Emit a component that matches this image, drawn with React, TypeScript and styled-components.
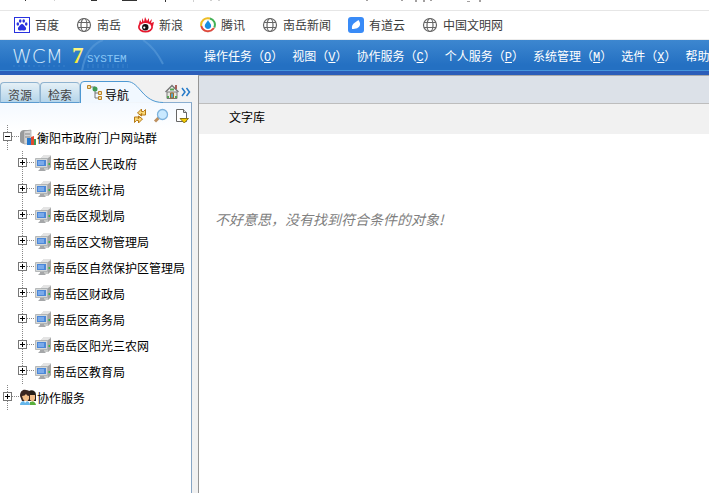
import React from "react";
import styled, { createGlobalStyle } from "styled-components";

const Global = createGlobalStyle`
  * { box-sizing: border-box; }
  html, body, #root { height: 100%; }
  body { margin: 0; background: #fff; color: #000; font: 12px/16px "Noto Sans CJK SC", sans-serif; overflow: hidden; }
  button { border: 0; padding: 0; background: none; font: inherit; color: inherit; cursor: pointer; }
  a { color: inherit; text-decoration: none; }
  svg { display: block; flex: none; }
`;

const Page = styled.div`display: flex; flex-direction: column; height: 100vh; overflow: hidden;`;
const BrowserEdge = styled.div`height: 11px; flex: none; overflow: hidden; border-bottom: 1px solid #e6e6e6;`;
const Bookmarks = styled.nav`
  display: flex; align-items: center; gap: 17px; height: 29px; flex: none; padding-left: 14px;
  color: #3c3c3c; white-space: nowrap; border-bottom: 1px solid #ececec;
`;
const Bookmark = styled.a`display: flex; align-items: center; gap: 5px;`;
const Header = styled.header`
  display: flex; flex: none; height: 35px; overflow: hidden; color: #fff;
  background: linear-gradient(#3d87d0, #2470c2 80%, #2470c2);
  border-bottom: 4px solid #2b5db9; box-shadow: inset 0 -1px #4595dc;
`;
const LogoBox = styled.div`width: 204px; flex: none;`;
const Menu = styled.nav`display: flex; gap: 9px; padding-top: 8px; white-space: nowrap;`;
const MenuButton = styled.button`height: 16px; line-height: 16px; flex: none;`;
const AccessKey = styled.u`font-family: "Liberation Mono", monospace;`;
const Workspace = styled.div`display: flex; flex: 1; min-height: 0; background: #f1f1f1;`;
const Sidebar = styled.aside`display: flex; flex-direction: column; width: 192px; flex: none; padding-top: 6px;`;
const TabBar = styled.div`display: flex; align-items: flex-end; height: 22px; flex: none;`;
const Tab = styled.button`
  width: 40px; height: 21px; padding-top: 4px; color: #444; border: 1px solid #8fb3d0; border-right-color: #a8c4da;
  border-bottom-color: #5b9bd0; border-radius: 4px 4px 0 0; background: linear-gradient(#e5f0f6, #b4d4ea); line-height: 16px;
`;
const ActiveTab = styled.button`position: relative; width: 83px; height: 22px; text-align: left;`;
const TabShape = styled.svg`position: absolute; left: 0; top: 0;`;
const TabLabel = styled.span`position: relative; display: flex; gap: 2px; padding: 1px 0 0 7px; & > span { padding-top: 4px; }`;
const TabTools = styled.div`
  display: flex; flex: 1; align-self: stretch; align-items: center; gap: 2px; padding-left: 2px;
  border-bottom: 1px solid #8aaed0;
`;
const Panel = styled.div`flex: 1; border-right: 1px solid #87a5c4; background: linear-gradient(#f4f9ff, #fff 28px);`;
const PanelTools = styled.div`display: flex; justify-content: flex-end; gap: 5px; height: 22px; padding: 4px 1px 0 0;`;
const Tree = styled.ul`list-style: none; margin: 0; padding: 0;`;
const NodeLink = styled.a`display: flex; align-items: center;`;
const Node = styled.li<{ $child?: boolean }>`
  display: flex; align-items: center; height: 26px; padding-left: ${p => (p.$child ? 17 : 2)}px; white-space: nowrap;
  ${NodeLink} { gap: ${p => (p.$child ? 1 : 0)}px; }
`;
const Toggle = styled.button`width: 18px; height: 26px; flex: none;`;
const Content = styled.main`flex: 1; min-width: 0; margin-left: 6px; background: #fff; border-left: 1px solid #959595; border-top: 1px solid #aaa;`;
const TopStrip = styled.div`height: 28px; background: #dce1e8; border-bottom: 1px solid #bdbdbd;`;
const Title = styled.h1`margin: 0; height: 30px; padding: 5px 0 0 30px; font-size: 12px; line-height: 16px; font-weight: 400; background: #f1f1f1;`;
const Empty = styled.p`margin: 75px 0 0 16px; font-size: 14px; line-height: 20px; font-style: italic; color: #808080;`;

const Globe = () => (
  <svg width="16" height="16" viewBox="0 0 16 16" fill="none" stroke="#666" strokeWidth="1.2">
    <circle cx="8" cy="8" r="6.5" /><ellipse cx="8" cy="8" rx="3" ry="6.5" /><path d="M2 5.5h12M2 10.5h12" />
  </svg>
);
const Baidu = () => (
  <svg width="16" height="16" viewBox="0 0 16 16">
    <rect x=".5" y=".5" width="15" height="15" fill="#fff" stroke="#2932df" />
    <g fill="#2932df"><ellipse cx="3.8" cy="7" rx="1.3" ry="1.8" /><ellipse cx="6.2" cy="4" rx="1.3" ry="1.8" /><ellipse cx="9.7" cy="4" rx="1.3" ry="1.8" /><ellipse cx="12.2" cy="7" rx="1.3" ry="1.8" /><path d="M8 7c1.5 0 2 1.7 3.2 2.7 1.5 1.3 1.2 3.6-.8 3.8-1 .1-1.5-.3-2.4-.3s-1.6.4-2.6.2c-1.8-.3-2-2.400-.6-3.700C6 8.600 6.500 7 8 7z" /></g>
  </svg>
);
const Sina = () => (
  <svg width="16" height="16" viewBox="0 0 16 16">
    <path d="M1 7 2 3l2 3V1l2 4 1-5 2 4 2-3v4l3-3-1 4 3-1-1 4z" fill="#e6162d" />
    <ellipse cx="7.5" cy="10" rx="7.5" ry="5.5" fill="#e6162d" /><ellipse cx="7.5" cy="10" rx="5.8" ry="3.9" fill="#fff" />
    <circle cx="7.3" cy="10.3" r="3.2" fill="#111" /><circle cx="6.3" cy="10.6" r="1.1" fill="#fff" />
  </svg>
);
const Tencent = () => (
  <svg width="16" height="16" viewBox="0 0 16 16" fill="none" strokeWidth="2">
    <circle cx="8" cy="8" r="7" fill="#fff" stroke="#ddd" strokeWidth="1" />
    <path d="M1.2 9C.5 4 5 0 10 1.500" stroke="#eebd24" /><path d="M10 1.500c4 1 6 5 4.300 9" stroke="#43b156" /><path d="M14 11c-4 5-11 4-12.700-2" stroke="#df493c" />
    <path d="M8 3c.5 2 4 4 3 7-1 2.500-5 2.500-6 0-1-3 2.500-5 3-7z" fill="#188fe0" />
  </svg>
);
const Youdao = () => (
  <svg width="16" height="16" viewBox="0 0 16 16"><rect width="16" height="16" rx="3" fill="#398bf7" /><path d="M4 12c-.5-3 .5-5 3-6.500L10.500 3c1 2 2 3 1.500 5-1 3-4 4-8 4z" fill="#fff" /></svg>
);
const Toolbar = () => (
  <svg width="500" height="10" viewBox="0 0 500 10" shapeRendering="crispEdges">
    <path d="M25 0h1v1h-1zM91 0h6v1h-6zM122 0h15v1h-15zM165 0h1v2h-1z" fill="#333" />
    <path d="M54 0h1v1h-1zM193 0h1v2h-1zM210 0h2v1h-2zM218 0h2v1h-2z" fill="#d0d0d0" />
    <path d="M366 0h2v1h-2zM401 0h2v1h-2zM415 0h2v2h-2zM423 0h2v2h-2zM430 0h2v1h-2zM467 1h3v1h-3zM479 0h2v2h-2z" fill="#a3a0a0" />
  </svg>
);
const SystemLogo = () => (
  <svg width="204" height="31" viewBox="0 0 204 31" role="img" aria-label="WCM 7 SYSTEM">
    <defs>
      <linearGradient id="silver" x2="0" y2="1"><stop stopColor="#fff" /><stop offset="1" stopColor="#a8d2f3" /></linearGradient>
      <linearGradient id="gold" x2="0" y2="1"><stop stopColor="#fff9a0" /><stop offset="1" stopColor="#f8e516" /></linearGradient>
    </defs>
    <path d="M82 31C84 18 90 5 103 0M143 0c9 6 15 14 20 24" fill="none" stroke="#5b9cda" strokeWidth="2" opacity=".6" />
    <text x="12" y="23" fontFamily="DejaVu Sans, sans-serif" fontSize="20" fontWeight="200" fill="url(#silver)">WCM</text>
    <text x="72" y="23" fontFamily="Liberation Serif, serif" fontSize="23" fontWeight="700" fill="url(#gold)">7</text>
    <text x="87" y="22" fontFamily="Liberation Mono, monospace" fontSize="11" fill="#8bc8f6">SYSTEM</text>
    <path d="M13 26h52M87 25h41M87 27h41" stroke="#67a8df" strokeDasharray="2 3" opacity=".35" />
  </svg>
);
const Expander = ({ open = false }: { open?: boolean }) => (
  <svg width="18" height="26" viewBox="0 0 18 26" fill="none" shapeRendering="crispEdges">
    <path d="M5.5 0v26M10 11.5h8" stroke="#888" strokeDasharray="1 1" />
    <rect x="1.5" y="7.5" width="8" height="8" fill="#fff" stroke="#777" />
    <path d={open ? "M3 11.5h5" : "M3 11.5h5M5.5 9v5"} stroke="#000" />
  </svg>
);
const Computer = () => (
  <svg width="17" height="18" viewBox="0 0 17 18">
    <path d="m6 3 3-3h7v12l-3 3H8z" fill="#c8cac9" /><path d="m6 3 3-3h7l-2 3z" fill="#e4e4e4" /><path d="M13 3v12l3-3V1z" fill="#a4a4a4" />
    <path d="M.5 3.500h12v9H.5z" fill="#d5d8d8" stroke="#a8acad" strokeWidth=".8" /><path d="M2 5h9v6H2z" fill="#4b87d8" /><path d="M3 6h6v4H3z" fill="#7aaaea" />
    <path d="M5 13h4v1l2 2H3l2-2z" fill="#a5a7a9" /><path d="M13.500 8h1.500v2h-1.500z" fill="#39b64a" />
  </svg>
);
const Site = () => (
  <svg width="17" height="18" viewBox="0 0 17 18">
    <path d="M0 4Q1 1 4 1h7v12l-3 2H4q-4-1-4-3z" fill="#999b9c" /><path d="m4 2 7-1v14H4z" fill="#d4d4d4" stroke="#999" strokeWidth=".6" /><path d="M5 5h5M5 8h5" stroke="#888" />
    <path d="M7 9h4v7H7z" fill="#2478cd" /><path d="m11 8 3-1v9h-3z" fill="#e14b2e" /><path d="M14 10h2v6h-2z" fill="#3d9d58" />
  </svg>
);
const People = () => (
  <svg width="17" height="18" viewBox="0 0 17 18">
    <path d="M7 5c1-5 9-5 9 1v6H8z" fill="#292019" /><path d="M0 7c0-5 3-7 6-6 4 0 5 3 4 8l-2 3H2z" fill="#3a2520" />
    <path d="M2 7q3 0 4-2 1 2 3 2v3q-3 5-6 0zM10 6h5v4l-2 3-3-2z" fill="#f4bd88" /><path d="M0 16q0-4 5-4t5 4z" fill="#65b6ea" /><path d="M10 16v-3q5-2 6 3z" fill="#58af3d" /><path d="m4 12 1 2 2-2z" fill="#fff" />
  </svg>
);
const NavIcon = () => (
  <svg width="16" height="18" viewBox="0 0 16 18"><path d="M2 4h6M8 6v9h4M8 10h4" fill="none" stroke="#777" /><path d="M.5 2.500h3v3h-3z" fill="#f5dca0" stroke="#b8842c" /><circle cx="8" cy="6" r="2.500" fill="#3f9b54" /><path d="M11.500 8.500h3v3h-3zM11.500 13.500h3v3h-3z" fill="#f5dca0" stroke="#b8842c" /></svg>
);
const Home = () => (
  <svg width="14" height="16" viewBox="0 0 14 16"><path d="M2 8h10v6.500H2z" fill="#e5e6df" stroke="#777" /><path d="M.5 8 7 1.500 13.500 8" fill="none" stroke="#777" strokeWidth="1.500" /><path d="M11 1v4" stroke="#a86058" strokeWidth="2" /><path d="M5.500 9h3v5h-3z" fill="#53a3c7" stroke="#a76d25" /><path d="M5 5.500h4M3 12v2M11 12v2" stroke="#55a454" strokeWidth="2" /></svg>
);
const Chevrons = () => <svg width="10" height="10" viewBox="0 0 10 10" fill="none" stroke="#267ac8" strokeWidth="1.500"><path d="m1 1 3 4-3 4M5.500 1l3 4-3 4" /></svg>;
const Refresh = () => (
  <svg width="16" height="16" viewBox="0 0 16 16" fill="#f9d978" stroke="#b77a17"><path d="m5.500 5 4-4v2.500h2l2-2v5.500h-5l1.500-1.500H9.500V8z" /><path d="m10.500 11-4 4v-2.500h-2l-2 2V9h5L6 10.500h.5V8z" /></svg>
);
const Search = () => <svg width="16" height="16" viewBox="0 0 16 16" fill="none"><path d="m6 9.500-4 4" stroke="#bd9060" strokeWidth="3" /><circle cx="9.500" cy="6.500" r="5" fill="#c9e9ff" stroke="#7eb3dd" strokeWidth="1.300" /></svg>;
const Document = () => <svg width="16" height="16" viewBox="0 0 16 16"><path d="M2.500 1.500h7l3 3v9h-10z" fill="#fff" stroke="#666" /><path d="M9.500 1.500v3h3" fill="#ddd" stroke="#666" /><path d="M6 10.500h8.500L10.300 15z" fill="#f5cd00" stroke="#8b7415" /></svg>;

const bookmarks = [["百度", Baidu], ["南岳", Globe], ["新浪", Sina], ["腾讯", Tencent], ["南岳新闻", Globe], ["有道云", Youdao], ["中国文明网", Globe]] as const;
const menus = [
  { name: "操作任务", accessKey: "O" }, { name: "视图", accessKey: "V" }, { name: "协作服务", accessKey: "C" },
  { name: "个人服务", accessKey: "P" }, { name: "系统管理", accessKey: "M" }, { name: "选件", accessKey: "X" }, { name: "帮助" },
];
const sites = ["南岳区人民政府", "南岳区统计局", "南岳区规划局", "南岳区文物管理局", "南岳区自然保护区管理局", "南岳区财政局", "南岳区商务局", "南岳区阳光三农网", "南岳区教育局"];

export default function App() {
  return (
    <Page>
      <Global />
      <BrowserEdge><Toolbar /></BrowserEdge>
      <Bookmarks>{bookmarks.map(([name, Icon]) => <Bookmark href="#" key={name}><Icon />{name}</Bookmark>)}</Bookmarks>
      <Header>
        <LogoBox><SystemLogo /></LogoBox>
        <Menu>
          {menus.map(({ name, accessKey }) => (
            <MenuButton key={name}>{name}{accessKey && <>（<AccessKey>{accessKey}</AccessKey>）</>}</MenuButton>
          ))}
        </Menu>
      </Header>
      <Workspace>
        <Sidebar>
          <TabBar>
            <Tab>资源</Tab><Tab>检索</Tab>
            <ActiveTab>
              <TabShape width="83" height="22" viewBox="0 0 83 22"><path d="M.5 22V4Q.5.5 4 .5h43c13 0 15 21 36 21" fill="#f1f8ff" stroke="#4d98d2" /></TabShape>
              <TabLabel><NavIcon /><span>导航</span></TabLabel>
            </ActiveTab>
            <TabTools><button aria-label="主页"><Home /></button><button aria-label="更多"><Chevrons /></button></TabTools>
          </TabBar>
          <Panel>
            <PanelTools><button aria-label="刷新"><Refresh /></button><button aria-label="查找"><Search /></button><button aria-label="新建"><Document /></button></PanelTools>
            <Tree>
              <Node><Toggle aria-label="收起"><Expander open /></Toggle><NodeLink href="#"><Site />衡阳市政府门户网站群</NodeLink></Node>
              {sites.map(site => <Node $child key={site}><Toggle aria-label="展开"><Expander /></Toggle><NodeLink href="#"><Computer />{site}</NodeLink></Node>)}
              <Node><Toggle aria-label="展开"><Expander /></Toggle><NodeLink href="#"><People />协作服务</NodeLink></Node>
            </Tree>
          </Panel>
        </Sidebar>
        <Content><TopStrip /><Title>文字库</Title><Empty>不好意思，没有找到符合条件的对象!</Empty></Content>
      </Workspace>
    </Page>
  );
}
